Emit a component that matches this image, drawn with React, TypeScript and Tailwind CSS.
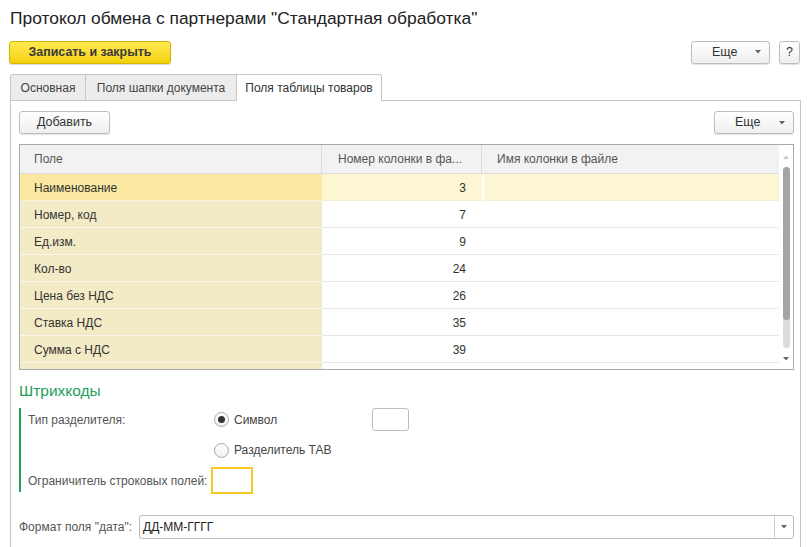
import React from "react";

const font = { fontFamily: '"Liberation Sans", Arial, sans-serif' };

function Btn({ children, className = "" }: { children: React.ReactNode; className?: string }) {
  return (
    <div
      className={`flex items-center h-[23px] rounded-[3px] border border-[#bdbdbd] bg-gradient-to-b from-white to-[#efefef] shadow-[0_1px_1px_rgba(0,0,0,0.12)] text-[12.5px] text-[#333] ${className}`}
    >
      {children}
    </div>
  );
}

function Caret() {
  return (
    <svg width="6" height="4" viewBox="0 0 6 4" className="shrink-0">
      <path d="M0 0 L6 0 L3 3.5 Z" fill="#666" />
    </svg>
  );
}

const rows = [
  { name: "Наименование", num: "3", sel: true },
  { name: "Номер, код", num: "7" },
  { name: "Ед.изм.", num: "9" },
  { name: "Кол-во", num: "24" },
  { name: "Цена без НДС", num: "26" },
  { name: "Ставка НДС", num: "35" },
  { name: "Сумма с НДС", num: "39" },
];

function Radio({ checked }: { checked?: boolean }) {
  return (
    <div className="w-[15px] h-[15px] shrink-0 rounded-full border border-[#a8a8a8] bg-gradient-to-b from-white to-[#f0f0f0] flex items-center justify-center">
      {checked && <div className="w-[7px] h-[7px] rounded-full bg-[#333]" />}
    </div>
  );
}

export default function App() {
  return (
    <div className="w-[807px] h-[547px] bg-white overflow-hidden text-[#333]" style={font}>
      <div className="pl-[10px] pt-[6px] h-[33px] text-[17.4px] text-[#222] leading-[24px] whitespace-nowrap">
        Протокол обмена с партнерами "Стандартная обработка"
      </div>
      <div className="flex items-center h-[24px] mt-[7px] pl-[9px] pr-[7px]">
        <div className="flex items-center justify-center w-[162px] h-[23px] rounded-[3px] border border-[#d4b300] bg-gradient-to-b from-[#ffea4d] to-[#f4d200] shadow-[0_1px_1px_rgba(0,0,0,0.15)] text-[12.4px] font-bold text-[#3a3a3a]">
          Записать и закрыть
        </div>
        <div className="flex-1" />
        <Btn className="w-[79px] pl-[20px] pr-[8px] justify-between">
          <span>Еще</span>
          <Caret />
        </Btn>
        <Btn className="w-[21px] justify-center ml-[9px]">?</Btn>
      </div>
      <div className="flex items-end h-[27px] mt-[9px] pl-[10px]">
        <div className="h-[26px] w-[76px] flex items-center justify-center bg-[#ececec] border border-b-0 border-[#c6c6c6] rounded-tl-[3px] text-[12px] text-[#444]">
          Основная
        </div>
        <div className="h-[26px] w-[151px] flex items-center justify-center bg-[#ececec] border border-l-0 border-b-0 border-[#c6c6c6] text-[12px] text-[#444]">
          Поля шапки документа
        </div>
        <div className="h-[27px] w-[145px] flex items-center justify-center bg-white border border-l-0 border-b-0 border-[#c6c6c6] rounded-tr-[3px] text-[12px] text-[#333] relative z-10 -mb-px">
          Поля таблицы товаров
        </div>
        <div className="flex-1 h-[1px]" />
      </div>
      <div className="ml-[10px] w-[791px] h-[460px] border border-b-0 border-[#c6c6c6] pl-[8px] pr-[6px] pt-[10px]">
        <div className="flex items-center">
          <Btn className="w-[91px] justify-center">Добавить</Btn>
          <div className="flex-1" />
          <Btn className="w-[80px] pl-[20px] pr-[8px] justify-between">
            <span>Еще</span>
            <Caret />
          </Btn>
        </div>
        <div className="mt-[10px] w-[775px] h-[226px] border border-[#a9a9a9] flex overflow-hidden">
          <div className="w-[760px] flex flex-col">
            <div className="flex h-[29px] shrink-0 bg-[#f2f2f2] border-b border-[#dcdcdc] text-[12px] text-[#555]">
              <div className="w-[302px] border-r border-[#dcdcdc] pl-[14px] flex items-center">Поле</div>
              <div className="w-[160px] border-r border-[#dcdcdc] pl-[16px] flex items-center">Номер колонки в фа...</div>
              <div className="flex-1 pl-[15px] flex items-center">Имя колонки в файле</div>
            </div>
            {rows.map((r) => (
              <div key={r.name} className="flex h-[27px] shrink-0 text-[12px] text-[#333]">
                <div
                  className={`w-[302px] pl-[14px] pt-px flex items-center border-b ${
                    r.sel ? "bg-[#fbe9a1] border-[#f6f0dc]" : "bg-[#f3eac6] border-[#f9f6ea]"
                  }`}
                >
                  {r.name}
                </div>
                <div
                  className={`w-[160px] pr-[16px] pt-px flex items-center justify-end border-b ${
                    r.sel ? "bg-[#fdf6d2] border-[#f3eedc]" : "bg-white border-[#e6e6e6]"
                  }`}
                >
                  {r.num}
                </div>
                <div
                  className={`flex-1 border-b ${
                    r.sel ? "bg-[#fdf6d2] border-[#f3eedc] border-l-2 border-l-white" : "bg-white border-[#e6e6e6]"
                  }`}
                />
              </div>
            ))}
            <div className="flex h-[10px] shrink-0">
              <div className="w-[302px] bg-[#f3eac6]" />
              <div className="flex-1 bg-white" />
            </div>
          </div>
          <div className="w-[14px] relative bg-white">
            <svg width="6" height="4" viewBox="0 0 6 4" className="absolute left-[4px] top-[10px]">
              <path d="M0 4 L6 4 L3 0.5 Z" fill="#c8c8c8" />
            </svg>
            <div className="absolute left-[4px] top-[22px] w-[7px] h-[181px] rounded-[4px] bg-[#dcdcdc]" />
            <div className="absolute left-[4px] top-[22px] w-[7px] h-[153px] rounded-[4px] bg-[#a4a4a4]" />
            <svg width="6" height="4" viewBox="0 0 6 4" className="absolute left-[4px] top-[212px]">
              <path d="M0 0 L6 0 L3 3.5 Z" fill="#666" />
            </svg>
          </div>
        </div>
        <div className="mt-[11px] text-[15.5px] text-[#22a05a] leading-[20px]">Штрихкоды</div>
        <div className="mt-[7px] border-l-2 border-[#1fa25a] pl-[7px] h-[84px] flex flex-col">
          <div className="flex items-center h-[23px] shrink-0">
            <div className="w-[186px] shrink-0 text-[12px] text-[#555]">Тип разделителя:</div>
            <Radio checked />
            <div className="ml-[5px] w-[138px] shrink-0 text-[12px] text-[#444]">Символ</div>
            <div className="w-[37px] h-[23px] shrink-0 border border-[#bdbdbd] rounded-[3px]" />
          </div>
          <div className="flex items-center h-[22px] mt-[8px] shrink-0">
            <div className="w-[186px] shrink-0" />
            <Radio />
            <div className="ml-[5px] text-[12px] text-[#444]">Разделитель ТАВ</div>
          </div>
          <div className="flex items-center h-[27px] mt-[6px] shrink-0">
            <div className="w-[183px] shrink-0 whitespace-nowrap text-[12px] text-[#555]">Ограничитель строковых полей:</div>
            <div className="w-[42px] h-[27px] shrink-0 border-2 border-[#f6c624]" />
          </div>
        </div>
        <div className="flex items-center mt-[23px]">
          <div className="w-[120px] shrink-0 whitespace-nowrap text-[12px] text-[#555]">Формат поля "дата":</div>
          <div className="w-[655px] h-[24px] border border-[#bdbdbd] rounded-[3px] flex items-center">
            <div className="flex-1 pl-[3px] text-[12px] text-[#222]">ДД-ММ-ГГГГ</div>
            <div className="w-[19px] h-full border-l border-[#d0d0d0] flex items-center justify-center">
              <Caret />
            </div>
          </div>
        </div>
      </div>
    </div>
  );
}
